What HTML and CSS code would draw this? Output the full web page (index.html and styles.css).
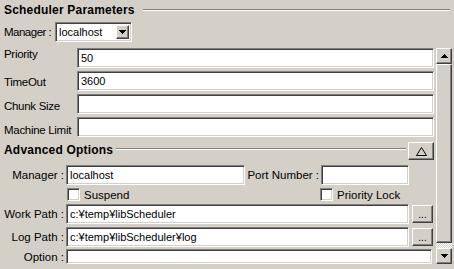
FILE: index.html
```html
<!DOCTYPE html>
<html>
<head>
<meta charset="utf-8">
<link rel="stylesheet" href="styles.css">
</head>
<body>
<div class="panel">
  <div class="head head-main">
    <span class="head-title">Scheduler Parameters</span><span class="rule"></span>
  </div>
  <div class="mgr-row">
    <span class="mgr-label">Manager :</span>
    <div class="combo">
      <span class="combo-text">localhost</span>
      <span class="raised combo-btn"><svg width="7" height="4" viewBox="0 0 7 4"><path d="M0 0h7v1H6v1H5v1H4v1H3V3H2V2H1V1H0z" fill="#000"/></svg></span>
    </div>
  </div>
  <div class="scroller">
    <div class="content">
      <div class="frow"><span class="flabel o0">Priority</span><div class="field wide">50</div></div>
      <div class="frow"><span class="flabel o5">TimeOut</span><div class="field wide">3600</div></div>
      <div class="frow"><span class="flabel o6">Chunk Size</span><div class="field wide"></div></div>
      <div class="frow"><span class="flabel o7">Machine Limit</span><div class="field wide"></div></div>
      <div class="head-adv">
        <span class="head-title adv-title">Advanced Options</span><span class="rule adv-rule"></span>
        <span class="raised collapse"><svg width="11" height="9" viewBox="0 0 11 9"><polygon points="5.5,0.5 10.5,8.5 0.5,8.5" fill="none" stroke="#000" stroke-width="1"/></svg></span>
      </div>
      <div class="arow first">
        <span class="alabel">Manager :</span><div class="field mgr">localhost</div>
        <span class="plabel">Port Number :</span><div class="field port"></div>
      </div>
      <div class="cbrow">
        <span class="cbitem suspend"><span class="cb"></span>Suspend</span>
        <span class="cbitem"><span class="cb"></span>Priority Lock</span>
      </div>
      <div class="arow gap3">
        <span class="alabel">Work Path :</span><div class="field path">c:¥temp¥libScheduler</div>
        <span class="raised dots">...</span>
      </div>
      <div class="arow gap3">
        <span class="alabel">Log Path :</span><div class="field path">c:¥temp¥libScheduler¥log</div>
        <span class="raised dots">...</span>
      </div>
      <div class="arow opt-row">
        <span class="alabel">Option :</span><div class="field opt"></div>
      </div>
    </div>
    <div class="vscroll">
      <div class="raised sbtn"><svg width="7" height="4" viewBox="0 0 7 4"><path d="M3 0h1v1h1v1h1v1h1v1H0V3h1V2h1V1h1z" fill="#000"/></svg></div>
      <div class="raised thumb"></div>
      <div class="track"></div>
      <div class="raised sbtn"><svg width="7" height="4" viewBox="0 0 7 4"><path d="M0 0h7v1H6v1H5v1H4v1H3V3H2V2H1V1H0z" fill="#000"/></svg></div>
    </div>
  </div>
</div>
</body>
</html>
```
FILE: styles.css
```css
* { box-sizing: border-box; }
html, body { margin: 0; padding: 0; }
body {
  background: #d4d0c8;
  font-family: "Liberation Sans", Arial, sans-serif;
  font-size: 11.5px;
  color: #000;
}
.panel { width: 454px; height: 269px; overflow: hidden; }

.raised {
  background: #d4d0c8;
  border: 1px solid;
  border-color: #fff #404040 #404040 #fff;
  box-shadow: inset -1px -1px #808080;
  display: flex;
  align-items: center;
  justify-content: center;
}
.field, .combo, .cb {
  background: #fff;
  border: 1px solid;
  border-color: #808080 #fff #fff #808080;
  box-shadow: inset 1px 1px #404040, inset -1px -1px #d4d0c8;
}

.head { display: flex; align-items: center; height: 14px; margin-top: 3px; padding-left: 4px; }
.head-title { font-weight: bold; font-size: 12px; letter-spacing: 0.2px; line-height: 14px; white-space: nowrap; }
.rule { flex: 1; height: 2px; border-top: 1px solid #808080; border-bottom: 1px solid #fff; }
.head-main .rule { margin-left: 8px; margin-right: 4px; }

.mgr-row { display: flex; align-items: center; height: 20px; margin-top: 5px; padding-left: 4px; }
.mgr-label { width: 51px; letter-spacing: -0.5px; white-space: nowrap; }
.combo {
  width: 77px; height: 20px;
  display: flex; align-items: center; justify-content: space-between;
  padding: 0 2px 0 3px; font-size: 11px;
}
.combo-btn { width: 13px; height: 14px; }

.scroller { display: flex; margin-top: 6px; height: 216px; }
.content { width: 434px; height: 216px; overflow: hidden; display: flex; flex-direction: column; }
.vscroll { width: 16px; margin-left: 2px; display: flex; flex-direction: column; }
.sbtn { height: 16px; flex: none; }
.thumb { height: 179px; flex: none; }
.track {
  height: 5px; flex: none;
  background: repeating-conic-gradient(#fff 0 25%, #d4d0c8 0 50%) 0 0 / 2px 2px;
}

.frow { display: flex; height: 20px; margin-bottom: 3px; flex: none; }
.flabel { width: 77px; padding-left: 4px; line-height: 12px; white-space: nowrap; letter-spacing: -0.3px; }
.o0 { padding-top: 0; }
.o5 { padding-top: 5px; }
.o6 { padding-top: 6px; }
.o7 { padding-top: 7px; }

.field {
  height: 20px; line-height: 18px; padding: 0 3px;
  font-size: 11px; white-space: nowrap; overflow: hidden; flex: none;
}
.field.wide { width: 357px; }

.head-adv { display: flex; align-items: flex-start; height: 18px; margin-top: 2px; padding-left: 4px; flex: none; }
.adv-title { margin-top: 1px; }
.adv-rule { margin-top: 6px; margin-left: 3px; }
.collapse { width: 26px; height: 18px; margin-left: 2px; }

.arow { display: flex; align-items: center; height: 20px; flex: none; }
.arow.first { margin-top: 5px; }
.arow.gap3 { margin-top: 3px; }
.alabel { width: 64px; margin-right: 2px; text-align: right; white-space: nowrap; }
.plabel { width: 76px; padding-right: 2px; text-align: right; white-space: nowrap; }
.field.mgr { width: 179px; }
.field.port { width: 88px; }
.field.path { width: 343px; }
.dots {
  width: 21px; height: 18px; margin-left: 3px;
  font-size: 10px; align-items: flex-end; padding-bottom: 3px; line-height: 8px;
}
.opt-row { margin-top: 2px; height: 15px; }
.field.opt { width: 366px; height: 15px; }

.cbrow { display: flex; align-items: center; height: 13px; margin-top: 3px; padding-left: 67px; flex: none; }
.cbitem { display: flex; align-items: center; gap: 4px; white-space: nowrap; }
.cbitem.suspend { width: 253px; }
.cb { width: 13px; height: 13px; flex: none; }
```
